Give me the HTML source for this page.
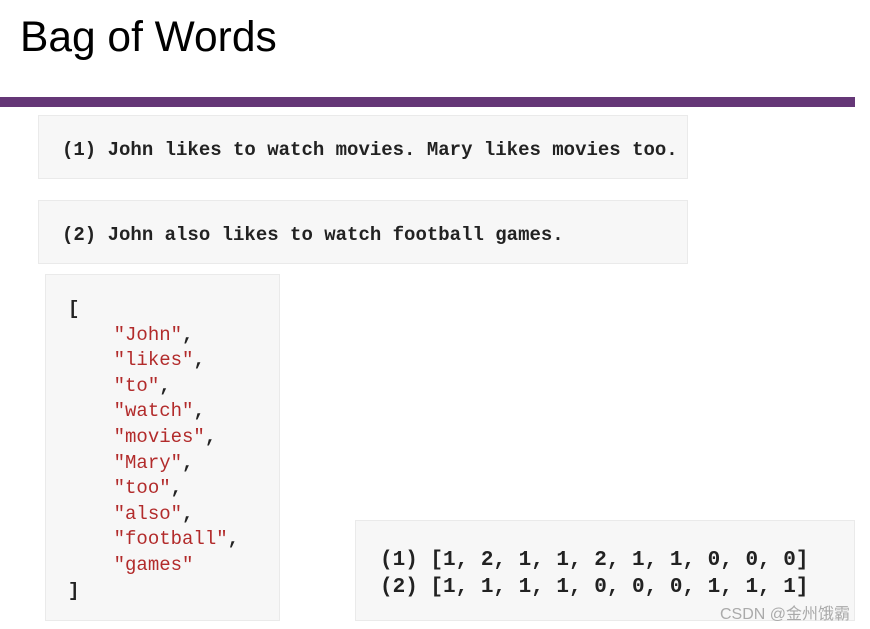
<!DOCTYPE html>
<html><head><style>
body{margin:0;width:870px;height:629px;background:#fff;position:relative;overflow:hidden;font-family:"Liberation Sans",sans-serif}
.t{position:absolute;left:20px;top:14px;font-size:42.5px;color:#000}
.bar{position:absolute;left:0;top:97px;width:855px;height:10px;background:#653777}
.box{position:absolute;background:#f7f7f7;border:1px solid #eaeaea;font-family:"Liberation Mono",monospace;font-weight:bold;color:#222;white-space:pre}
.s{color:#b22b2b;font-weight:normal}
</style></head><body>
<div class="t">Bag of Words</div>
<div class="bar"></div>
<div class="box" style="left:38px;top:115px;width:650px;height:64px;font-size:19px;line-height:68px;padding-left:23px;box-sizing:border-box">(1) John likes to watch movies. Mary likes movies too.</div>
<div class="box" style="left:38px;top:200px;width:650px;height:64px;font-size:19px;line-height:68px;padding-left:23px;box-sizing:border-box">(2) John also likes to watch football games.</div>
<div class="box" style="left:45px;top:274px;width:235px;height:347px;font-size:19px;line-height:25.6px;padding:22px 0 0 22px;box-sizing:border-box">[
    <span class="s">"John"</span>,
    <span class="s">"likes"</span>,
    <span class="s">"to"</span>,
    <span class="s">"watch"</span>,
    <span class="s">"movies"</span>,
    <span class="s">"Mary"</span>,
    <span class="s">"too"</span>,
    <span class="s">"also"</span>,
    <span class="s">"football"</span>,
    <span class="s">"games"</span>
]</div>
<div class="box" style="left:355px;top:520px;width:500px;height:101px;font-size:21px;line-height:27px;padding:26px 0 0 24px;box-sizing:border-box">(1) [1, 2, 1, 1, 2, 1, 1, 0, 0, 0]
(2) [1, 1, 1, 1, 0, 0, 0, 1, 1, 1]</div>
<div style="position:absolute;left:720px;top:600px;font-size:16px;color:#aaa;font-family:'Liberation Sans','Noto Sans CJK SC',sans-serif">CSDN @金州饿霸</div>
</body></html>
